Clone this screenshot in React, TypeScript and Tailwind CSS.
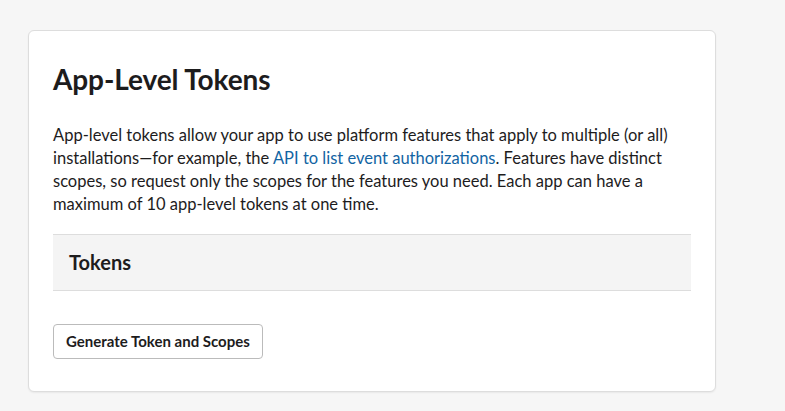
import React from 'react';

export default function App() {
    return (
        <div className="min-h-screen bg-[#f6f6f6] pt-[30px] pl-[28px] font-['Lato','Noto_Sans',sans-serif] text-[#1d1c1d]">
            <div className="w-[688px] bg-white border border-[#dddddd] rounded-[6px] shadow-[0_1px_2px_rgba(0,0,0,0.06)] px-6 pt-[30px] pb-8">
                <h2 className="text-[28px] leading-[36px] font-bold tracking-[-0.1px]">App-Level Tokens</h2>

                <p className="mt-[27px] text-[16.5px] leading-[23px]">
                    App-level tokens allow your app to use platform features that apply to multiple (or all)
                    installations—for example, the{' '}
                    <a href="#" className="text-[#1264a3]">API to list event authorizations</a>. Features have distinct
                    scopes, so request only the scopes for the features you need. Each app can have a maximum of 10
                    app-level tokens at one time.
                </p>

                {/* Tokens section */}
                <div className="mt-[18px] bg-[#f4f4f4] border-y border-[#dddddd] px-4 py-[14px]">
                    <h3 className="text-[20px] leading-[27px] font-bold">Tokens</h3>
                </div>

                <button className="mt-[33px] h-[35px] px-[12px] border border-[#bbbbbb] rounded-[4px] bg-white text-[15px] font-bold">
                    Generate Token and Scopes
                </button>
            </div>
        </div>
    );
}
